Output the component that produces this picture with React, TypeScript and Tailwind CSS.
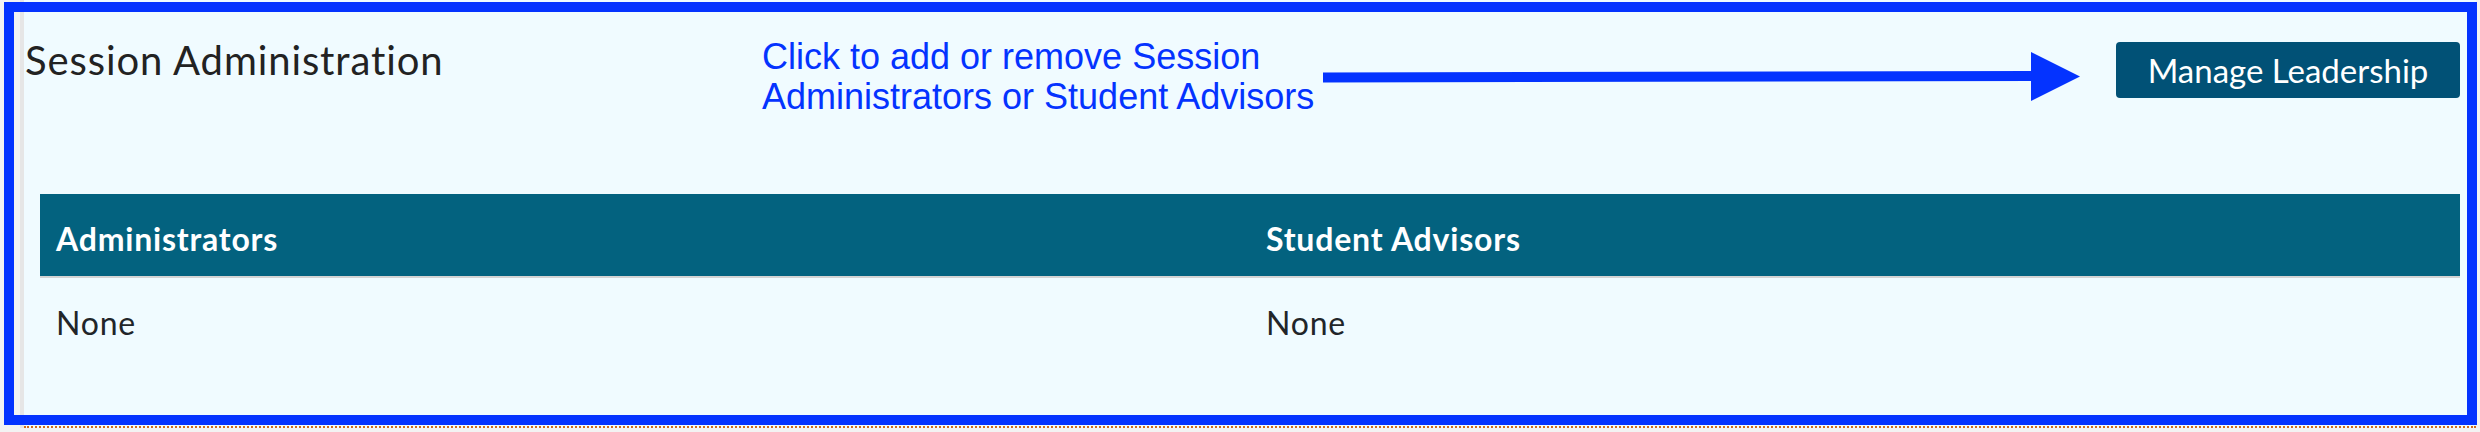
export default function App() {
  return (
    <div className="relative h-[432px] w-[2480px] overflow-hidden bg-[#f3f3f3] font-['Lato',sans-serif]">
      {/* session panel */}
      <section className="ml-[20px] mr-[4px] flex h-[428px] flex-col border-l-4 border-[#e6e6e6] bg-[#f0fbff]">
        <div className="flex h-[194px] items-start">
          <h2 className="mt-[36px] w-[738px] pl-px text-[40px] leading-[48px] tracking-[0.9px] text-[#222]">
            Session Administration
          </h2>
          <p className="mt-[37px] w-[561px] font-['Liberation_Sans',Arial,sans-serif] text-[36px] leading-[40px] text-[#0433ff]">
            Click to add or remove Session Administrators or Student Advisors
          </p>
          <svg width="757" height="50" viewBox="0 0 757 50" className="mt-[52px] shrink-0">
            <path d="M0 20.5 L708 19 L708 29 L0 30.5 Z" fill="#0433ff" />
            <path d="M708 0 L757 24.5 L708 49 Z" fill="#0433ff" />
          </svg>
          <button className="ml-[36px] mt-[42px] h-[56px] w-[344px] rounded-[4px] bg-[#015176] text-[33px] leading-none text-white">
            Manage Leadership
          </button>
        </div>

        <div className="mx-4 grid flex-1 grid-cols-2 grid-rows-[84px_1fr] tracking-[0.8px]">
          <div className="border-b-2 border-[#d3d3d3] bg-[#03627f] px-4 pt-[26px] text-[32px] font-bold leading-[38px] text-white">
            Administrators
          </div>
          <div className="border-b-2 border-[#d3d3d3] bg-[#03627f] px-4 pt-[26px] text-[32px] font-bold leading-[38px] text-white">
            Student Advisors
          </div>
          <div className="px-4 pt-[26px] text-[32px] leading-[38px] text-[#212529]">None</div>
          <div className="px-4 pt-[26px] text-[32px] leading-[38px] text-[#212529]">None</div>
        </div>

        <div className="border-b-2 border-dotted border-[#d06a1c]" />
      </section>

      {/* annotation frame over the panel */}
      <div className="pointer-events-none absolute left-[4px] top-[2px] h-[423px] w-[2473px] border-[10px] border-[#0433ff]" />
    </div>
  );
}
